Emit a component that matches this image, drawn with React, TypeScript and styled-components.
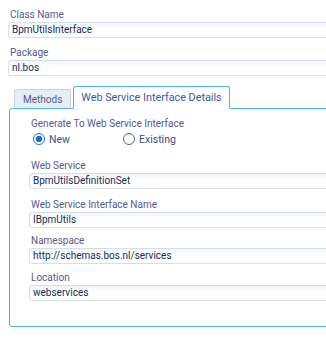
import React from "react";
import styled, { createGlobalStyle } from "styled-components";

const Global = createGlobalStyle`
  html, body { margin: 0; padding: 0; background: #ffffff; overflow: hidden; }
  body { font-family: Roboto, "Open Sans", sans-serif; font-size: 10px; }
`;

const Page = styled.div`
  width: 380px;
  padding: 8px 0 0 8px;
  box-sizing: border-box;
`;

const Field = styled.div<{ $gap?: number }>`
  display: flex;
  flex-direction: column;
  margin-bottom: ${(p) => p.$gap ?? 8}px;
`;

const Label = styled.label`
  color: #58588e;
  font-size: 10px;
  line-height: 14px;
  padding-left: 2px;
  white-space: nowrap;
`;

const Input = styled.div`
  height: 16px;
  box-sizing: border-box;
  border: 1px solid #d6dee9;
  border-radius: 3px;
  background: linear-gradient(#f2f4f8 0, #ffffff 45%);
  color: #142c55;
  font-size: 10px;
  line-height: 14px;
  padding-left: 3px;
  white-space: nowrap;
`;

const TabList = styled.div`
  display: flex;
  align-items: flex-end;
  padding-left: 6px;
  gap: 2px;
  position: relative;
  z-index: 1;
  margin-bottom: -1px;
`;

const Tab = styled.div<{ $active?: boolean }>`
  box-sizing: border-box;
  height: ${(p) => (p.$active ? 23 : 20)}px;
  padding: 0 ${(p) => (p.$active ? 7 : 8)}px;
  display: flex;
  align-items: center;
  border: 1px solid ${(p) => (p.$active ? "#47b3ea" : "#c9d3df")};
  border-bottom: ${(p) => (p.$active ? "1px solid #ffffff" : "1px solid #47b3ea")};
  border-radius: 3px 3px 0 0;
  background: ${(p) => (p.$active ? "#ffffff" : "#e7edf5")};
  color: ${(p) => (p.$active ? "#3b5a9c" : "#4d5d7c")};
  font-size: ${(p) => (p.$active ? 10.8 : 10)}px;
  white-space: nowrap;
`;

const Panel = styled.div`
  border: 1px solid #47b3ea;
  border-radius: 3px 0 0 3px;
  margin-left: 1px;
  height: 219px;
  box-sizing: border-box;
  padding: 8px 0 0 19px;
`;

const RadioRow = styled.div`
  display: flex;
  align-items: center;
  height: 14px;
  padding-left: 4px;
  margin-top: 1px;
`;

const RadioOption = styled.span<{ $width?: number }>`
  display: flex;
  align-items: center;
  gap: 4px;
  width: ${(p) => p.$width ?? 90}px;
  color: #3b4f7e;
  font-size: 10.5px;
`;

const RadioCircle = styled.span<{ $checked?: boolean }>`
  width: 12px;
  height: 12px;
  box-sizing: border-box;
  border-radius: 50%;
  border: 1px solid ${(p) => (p.$checked ? "#1a6fe0" : "#5d6470")};
  background: ${(p) =>
    p.$checked
      ? "radial-gradient(circle, #1a6fe0 0 3px, #ffffff 3.5px)"
      : "#ffffff"};
  flex: none;
`;

export default function App() {
  return (
    <Page>
      <Global />
      <Field>
        <Label>Class Name</Label>
        <Input>BpmUtilsInterface</Input>
      </Field>
      <Field $gap={10}>
        <Label>Package</Label>
        <Input>nl.bos</Input>
      </Field>
      <TabList>
        <Tab>Methods</Tab>
        <Tab $active>Web Service Interface Details</Tab>
      </TabList>
      <Panel>
        <Field $gap={13}>
          <Label>Generate To Web Service Interface</Label>
          <RadioRow>
            <RadioOption $width={90}>
              <RadioCircle $checked />
              New
            </RadioOption>
            <RadioOption>
              <RadioCircle />
              Existing
            </RadioOption>
          </RadioRow>
        </Field>
        <Field $gap={9}>
          <Label>Web Service</Label>
          <Input>BpmUtilsDefinitionSet</Input>
        </Field>
        <Field $gap={6}>
          <Label>Web Service Interface Name</Label>
          <Input>IBpmUtils</Input>
        </Field>
        <Field $gap={7}>
          <Label>Namespace</Label>
          <Input>http://schemas.bos.nl/services</Input>
        </Field>
        <Field>
          <Label>Location</Label>
          <Input>webservices</Input>
        </Field>
      </Panel>
    </Page>
  );
}
